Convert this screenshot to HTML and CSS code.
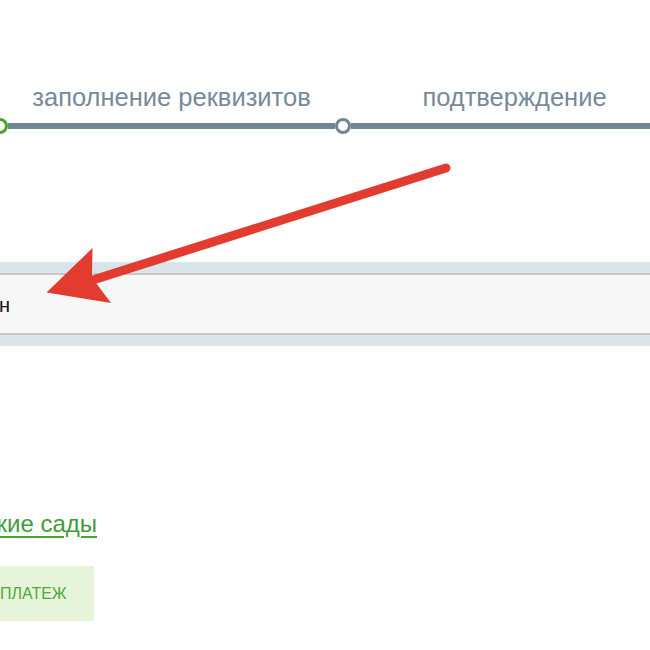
FILE: index.html
```html
<!DOCTYPE html>
<html lang="ru">
<head>
<meta charset="utf-8">
<title>Оплата</title>
<link rel="stylesheet" href="styles.css">
</head>
<body>
<div class="page">
  <div class="stepper">
    <div class="step-labels">
      <div class="step-label">заполнение реквизитов</div>
      <div class="step-label">подтверждение</div>
    </div>
    <div class="track">
      <span class="dot dot-done"></span>
      <span class="seg seg-fixed"></span>
      <span class="dot"></span>
      <span class="seg seg-fill"></span>
    </div>
  </div>

  <div class="field-band">
    <div class="field">н</div>
  </div>

  <div class="link-row">
    <a class="category-link" href="#">Детские сады</a>
  </div>

  <div class="btn-row">
    <span class="pay-btn">ПЛАТЕЖ</span>
  </div>
</div>

<svg class="annotation" width="650" height="650" viewBox="0 0 650 650" xmlns="http://www.w3.org/2000/svg">
  <line x1="446" y1="168" x2="96" y2="279" stroke="#e23b30" stroke-width="9" stroke-linecap="round"/>
  <polygon points="46.5,292.5 92.5,248 92,274 96,283 111,303" fill="#e23b30"/>
</svg>
</body>
</html>
```

FILE: styles.css
```css
html, body {
  margin: 0;
  padding: 0;
  background: #ffffff;
}

body {
  width: 650px;
  height: 650px;
  overflow: hidden;
  position: relative;
  font-family: "Liberation Sans", Arial, sans-serif;
}

.page {
  padding-top: 82px;
}

.step-labels {
  display: grid;
  grid-template-columns: 343px 343px;
}

.step-label {
  text-align: center;
  font-size: 25.5px;
  line-height: 30px;
  color: #77899a;
  white-space: nowrap;
}

.track {
  display: flex;
  align-items: center;
  margin-top: 6px;
  height: 16px;
}

.dot {
  flex: none;
  width: 16px;
  height: 16px;
  box-sizing: border-box;
  border: 3px solid #6f8693;
  border-radius: 50%;
  background: #ffffff;
}

.dot-done {
  margin-left: -8px;
  border-color: #4aa52e;
}

.seg {
  height: 6px;
  background: #6f8693;
}

.seg-fixed {
  flex: none;
  width: 327px;
}

.seg-fill {
  flex: 1;
}

.field-band {
  margin-top: 128px;
  background: #d9e5e8;
  padding: 11px 0;
}

.field {
  margin-left: -20px;
  padding-left: 19px;
  height: 58px;
  background: #f7f7f7;
  border-top: 2px solid #c6c6c6;
  border-bottom: 2px solid #c6c6c6;
  font-size: 20px;
  line-height: 60px;
  color: #111111;
}

.link-row {
  margin-top: 164px;
  line-height: 28px;
}

.category-link {
  display: inline-block;
  margin-left: -55px;
  font-size: 24px;
  color: #3f9b3a;
  text-decoration: underline;
  text-decoration-color: #4aa52e;
  text-decoration-thickness: 2px;
  text-underline-offset: 4px;
  white-space: nowrap;
}

.btn-row {
  margin-top: 25px;
}

.pay-btn {
  display: inline-flex;
  align-items: center;
  height: 55px;
  margin-left: -27px;
  padding: 0 27px;
  background: #e6f5d9;
  color: #4fa838;
  font-size: 16px;
  white-space: nowrap;
}

.annotation {
  position: absolute;
  left: 0;
  top: 0;
  pointer-events: none;
}
```
